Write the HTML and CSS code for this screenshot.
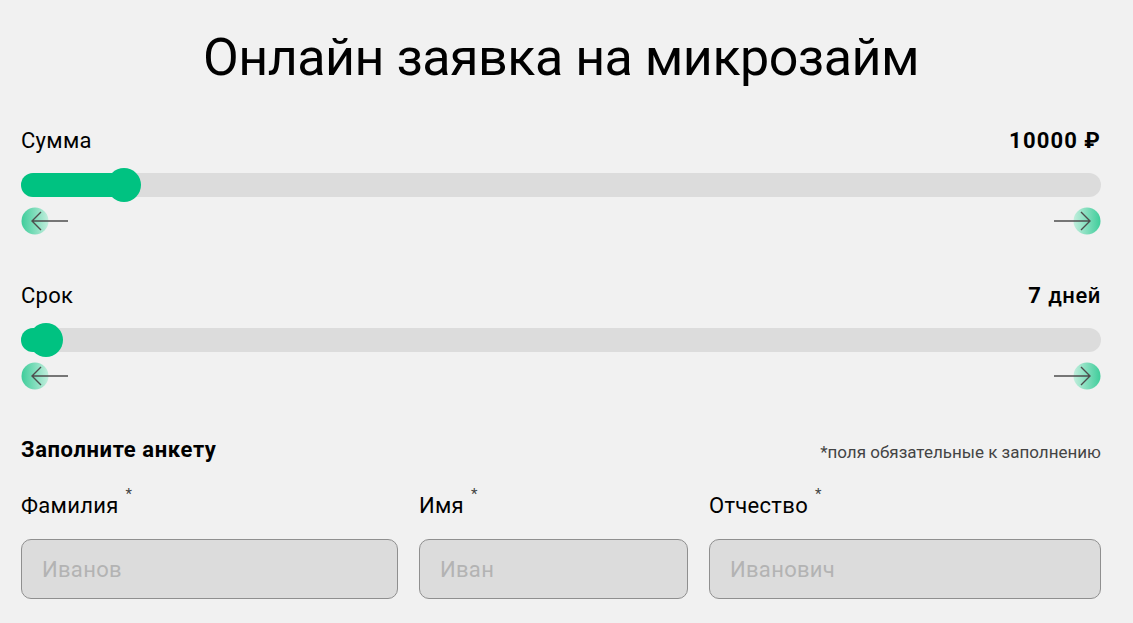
FILE: index.html
```html
<!DOCTYPE html>
<html>
<head>
    <link rel="stylesheet" href="styles.css">
</head>
<body>
<div class="page">
    <h1 class="title">Онлайн заявка на микрозайм</h1>

    <div class="range">
        <div class="range-head">
            <span class="range-label">Сумма</span>
            <span class="range-value"><b>10000</b> <b>₽</b></span>
        </div>
        <div class="track">
            <div class="fill" style="width: 9.5%"></div>
            <div class="thumb" style="left: 9.5%"></div>
        </div>
        <div class="arrows">
            <button class="arrow">
                <svg width="48" height="28" viewBox="0 0 48 28">
                    <defs>
                        <linearGradient id="g1" x1="0" y1="0" x2="1" y2="0">
                            <stop offset="0" stop-color="#3fcd9b"/>
                            <stop offset="1" stop-color="#c2eedd"/>
                        </linearGradient>
                    </defs>
                    <circle cx="14" cy="14" r="13.5" fill="url(#g1)"/>
                    <path d="M47 14H11M20 5L11 14L20 23" fill="none" stroke="#4d4d4d" stroke-width="1.4"/>
                </svg>
            </button>
            <button class="arrow arrow-right">
                <svg width="48" height="28" viewBox="0 0 48 28">
                    <circle cx="14" cy="14" r="13.5" fill="url(#g1)"/>
                    <path d="M47 14H11M20 5L11 14L20 23" fill="none" stroke="#4d4d4d" stroke-width="1.4"/>
                </svg>
            </button>
        </div>
    </div>

    <div class="range">
        <div class="range-head">
            <span class="range-label">Срок</span>
            <span class="range-value"><b>7</b> дней</span>
        </div>
        <div class="track">
            <div class="fill" style="width: 2.3%"></div>
            <div class="thumb" style="left: 2.3%"></div>
        </div>
        <div class="arrows">
            <button class="arrow">
                <svg width="48" height="28" viewBox="0 0 48 28">
                    <circle cx="14" cy="14" r="13.5" fill="url(#g1)"/>
                    <path d="M47 14H11M20 5L11 14L20 23" fill="none" stroke="#4d4d4d" stroke-width="1.4"/>
                </svg>
            </button>
            <button class="arrow arrow-right">
                <svg width="48" height="28" viewBox="0 0 48 28">
                    <circle cx="14" cy="14" r="13.5" fill="url(#g1)"/>
                    <path d="M47 14H11M20 5L11 14L20 23" fill="none" stroke="#4d4d4d" stroke-width="1.4"/>
                </svg>
            </button>
        </div>
    </div>

    <div class="form-head">
        <h2>Заполните анкету</h2>
        <span class="note">*поля обязательные к заполнению</span>
    </div>

    <div class="fields">
        <label class="field">
            <span class="field-label">Фамилия<sup>*</sup></span>
            <input type="text" placeholder="Иванов">
        </label>
        <label class="field">
            <span class="field-label">Имя<sup>*</sup></span>
            <input type="text" placeholder="Иван">
        </label>
        <label class="field">
            <span class="field-label">Отчество<sup>*</sup></span>
            <input type="text" placeholder="Иванович">
        </label>
    </div>
</div>
</body>
</html>
```

FILE: styles.css
```css
body {
    margin: 0;
    background-color: #f1f1f1;
    font-family: Roboto, "Noto Sans", sans-serif;
    color: #000;
}
.page {
    width: 1080px;
    padding: 27px 0 0 21px;
}
.title {
    margin: 0;
    font-size: 52px;
    font-weight: 400;
    line-height: 62px;
    text-align: center;
    letter-spacing: -0.5px;
}
.range {
    margin-top: 39px;
}
.range + .range {
    margin-top: 48px;
}
.range-head {
    display: flex;
    justify-content: space-between;
    align-items: center;
    height: 24px;
    font-size: 22px;
    letter-spacing: 0.3px;
}
.range-value {
    font-weight: 500;
    letter-spacing: 0.6px;
}
.range-value b {
    font-weight: 700;
    letter-spacing: 1.2px;
}
.track {
    position: relative;
    height: 24px;
    margin-top: 21px;
    background-color: #dcdcdc;
    border-radius: 12px;
}
.fill {
    height: 100%;
    background-color: #00c281;
    border-radius: 12px;
}
.thumb {
    position: absolute;
    top: 50%;
    width: 34px;
    height: 34px;
    background-color: #00c281;
    border-radius: 50%;
    transform: translate(-50%, -50%);
}
.arrows {
    display: flex;
    justify-content: space-between;
    margin-top: 10px;
    height: 28px;
}
.arrow {
    padding: 0;
    border: none;
    background: none;
    cursor: pointer;
    height: 28px;
}
.arrow svg {
    display: block;
}
.arrow-right svg {
    transform: scaleX(-1);
}
.form-head {
    display: flex;
    justify-content: space-between;
    align-items: flex-end;
    margin-top: 48px;
    height: 24px;
}
.form-head h2 {
    margin: 0;
    font-size: 22px;
    font-weight: 700;
    line-height: 24px;
    letter-spacing: 0.6px;
}
.note {
    font-size: 17px;
    color: #444;
    line-height: 20px;
}
.fields {
    display: grid;
    grid-template-columns: 377px 269px 1fr;
    gap: 21px;
    margin-top: 32px;
}
.field {
    display: flex;
    flex-direction: column;
}
.field-label {
    font-size: 22px;
    line-height: 24px;
    letter-spacing: 0.3px;
}
.field-label sup {
    font-size: 15px;
    line-height: 0;
    color: #444;
    margin-left: 7px;
    vertical-align: 14px;
}
.field input {
    margin-top: 21px;
    height: 60px;
    box-sizing: border-box;
    padding: 0 20px;
    border: 1px solid #8f8f8f;
    border-radius: 10px;
    background-color: #dcdcdc;
    font-family: Roboto, "Noto Sans", sans-serif;
    font-size: 22px;
    letter-spacing: 0.3px;
    color: #000;
}
.field input::placeholder {
    color: #b3b3b3;
}
```
